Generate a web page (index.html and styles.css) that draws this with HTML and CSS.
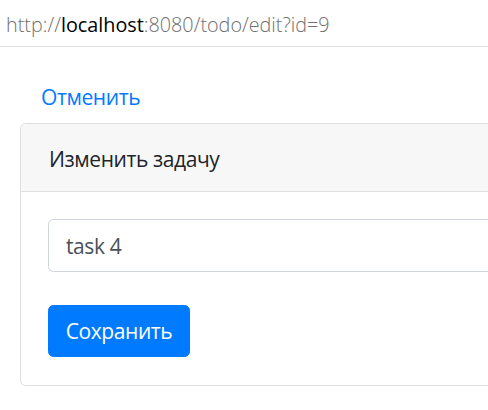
FILE: index.html
```html
<!DOCTYPE html>
<html lang="ru">
<head>
<meta charset="utf-8">
<title>Изменить задачу</title>
<link rel="stylesheet" href="styles.css">
</head>
<body>
<div class="urlbar"><span class="dim">http://</span><span class="host">localhost</span><span class="dim">:8080/todo/edit?id=9</span></div>
<main class="page">
  <a class="cancel" href="#">Отменить</a>
  <div class="card">
    <div class="card-header">Изменить задачу</div>
    <div class="card-body">
      <input class="form-control" type="text" value="task 4">
      <button class="btn" type="button">Сохранить</button>
    </div>
  </div>
</main>
</body>
</html>
```
FILE: styles.css
```css
html, body {
  margin: 0;
  padding: 0;
  overflow: hidden;
  background: #fff;
}
body {
  font-family: "Open Sans", "Noto Sans", sans-serif;
  color: #212529;
}
.urlbar {
  height: 46px;
  border-bottom: 1px solid #e3e3e3;
  box-sizing: content-box;
  padding-left: 6px;
  font-size: 19.8px;
  font-weight: 300;
  line-height: 50px;
  white-space: nowrap;
}
.urlbar .dim { color: #6f6f6f; }
.urlbar .host { color: #000; font-weight: 400; }
.page {
  padding: 34px 0 0 20px;
}
.cancel,
.card-header,
.form-control,
.btn {
  font-family: "Open Sans", "Noto Sans", sans-serif;
  font-size: 21px;
  letter-spacing: -0.4px;
}
.cancel {
  display: block;
  margin-left: 21px;
  height: 33px;
  margin-bottom: 9px;
  line-height: 33px;
  color: #007bff;
  text-decoration: none;
}
.card {
  width: 700px;
  border: 1px solid #dfdfdf;
  border-radius: 5.5px;
  background: #fff;
}
.card-header {
  padding: 19px 28px 15px;
  line-height: 33px;
  background: #f7f7f7;
  border-bottom: 1px solid #dfdfdf;
  border-radius: 5.5px 5.5px 0 0;
}
.card-body {
  padding: 27px 27px 28px;
  display: flex;
  flex-direction: column;
  align-items: flex-start;
}
.form-control {
  box-sizing: border-box;
  width: 100%;
  height: 53px;
  margin: 0 0 33px;
  padding: 0 17px;
  color: #495057;
  border: 1px solid #ced4da;
  border-radius: 5.5px;
  background: #fff;
  outline: none;
}
.btn {
  box-sizing: border-box;
  width: 142px;
  height: 52px;
  padding: 0 10px;
  line-height: 33px;
  color: #fff;
  background: #007bff;
  border: 1px solid #007bff;
  border-radius: 5.5px;
}
```
